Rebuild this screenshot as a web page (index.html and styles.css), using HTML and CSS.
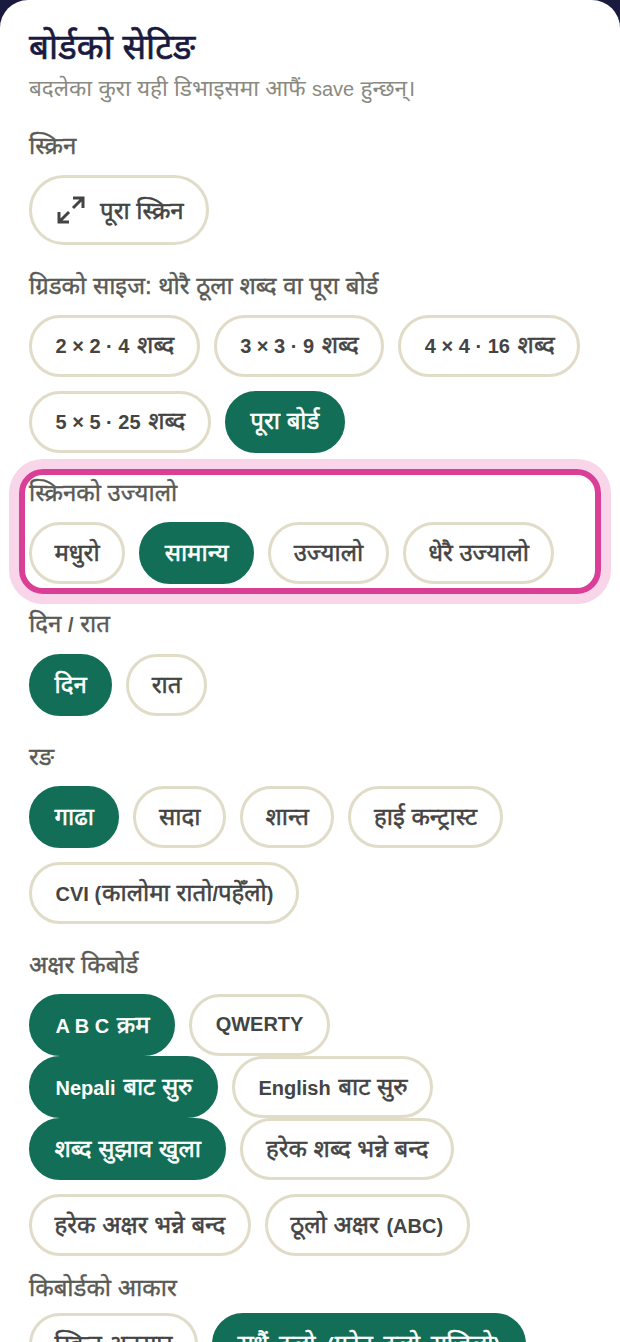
FILE: index.html
```html
<!DOCTYPE html>
<html lang="hi">
<head>
    <meta charset="UTF-8">
    <meta name="viewport" content="width=device-width, initial-scale=1.0">
    <title>बोर्डको सेटिङ</title>
    <link rel="stylesheet" href="styles.css">
</head>
<body>
    <div class="sheet">
        <h1>बोर्डको सेटिङ</h1>
        <p class="hint">बदलेका कुरा यही डिभाइसमा आफैं <span class="lat">save</span> हुन्छन्।</p>

        <div class="group group-first">
            <div class="label">स्क्रिन</div>
            <div class="chips">
                <button class="chip chip-icon">
                    <svg class="icon" viewBox="0 0 28 28" fill="none" stroke="currentColor" stroke-width="3">
                        <path d="M16 12 26 2M16 2h10v10M12 16 2 26M2 16v10h10"/>
                    </svg>
                    पूरा स्क्रिन
                </button>
            </div>
        </div>

        <div class="group">
            <div class="label">ग्रिडको साइज: थोरै ठूला शब्द वा पूरा बोर्ड</div>
            <div class="chips">
                <button class="chip"><span class="lat">2 × 2 · 4</span> शब्द</button>
                <button class="chip"><span class="lat">3 × 3 · 9</span> शब्द</button>
                <button class="chip"><span class="lat">4 × 4 · 16</span> शब्द</button>
                <button class="chip"><span class="lat">5 × 5 · 25</span> शब्द</button>
                <button class="chip active">पूरा बोर्ड</button>
            </div>
        </div>

        <div class="group highlight">
            <div class="label">स्क्रिनको उज्यालो</div>
            <div class="chips">
                <button class="chip">मधुरो</button>
                <button class="chip active">सामान्य</button>
                <button class="chip">उज्यालो</button>
                <button class="chip">धेरै उज्यालो</button>
            </div>
        </div>

        <div class="group">
            <div class="label">दिन <span class="lat">/</span> रात</div>
            <div class="chips">
                <button class="chip active">दिन</button>
                <button class="chip">रात</button>
            </div>
        </div>

        <div class="group">
            <div class="label">रङ</div>
            <div class="chips">
                <button class="chip active">गाढा</button>
                <button class="chip">सादा</button>
                <button class="chip">शान्त</button>
                <button class="chip">हाई कन्ट्रास्ट</button>
                <button class="chip"><span class="lat">CVI (</span>कालोमा रातो<span class="lat">/</span>पहेँलो<span class="lat">)</span></button>
            </div>
        </div>

        <div class="group">
            <div class="label">अक्षर किबोर्ड</div>
            <div class="chips">
                <button class="chip active"><span class="lat">A B C</span> क्रम</button>
                <button class="chip"><span class="lat">QWERTY</span></button>
            </div>
            <div class="chips">
                <button class="chip active"><span class="lat">Nepali</span> बाट सुरु</button>
                <button class="chip"><span class="lat">English</span> बाट सुरु</button>
            </div>
            <div class="chips">
                <button class="chip active">शब्द सुझाव खुला</button>
                <button class="chip">हरेक शब्द भन्ने बन्द</button>
                <button class="chip">हरेक अक्षर भन्ने बन्द</button>
                <button class="chip">ठूलो अक्षर <span class="lat">(ABC)</span></button>
            </div>
        </div>

        <div class="group group-tight">
            <div class="label">किबोर्डको आकार</div>
            <div class="chips">
                <button class="chip">स्क्रिन अनुसार</button>
                <button class="chip chip-long active">सधैं ठूलो <span class="lat">(</span>फोन ठूलो सजिलो<span class="lat">)</span></button>
            </div>
        </div>
    </div>
</body>
</html>
```

FILE: styles.css
```css
html, body {
    margin: 0;
    height: 100%;
    overflow: hidden;
}
body {
    background: #1a1a3e;
    font-family: 'Liberation Sans', 'Noto Sans', sans-serif;
}
.sheet {
    background: #fff;
    border-radius: 28px 28px 0 0;
    padding: 27px 29px 0;
    height: 100%;
    box-sizing: border-box;
}
.lat {
    font-size: 20px;
    font-weight: 700;
    -webkit-text-stroke: 0;
}
.chip .lat:first-child {
    padding: 0 1px;
}
h1 {
    margin: 0;
    font-size: 35px;
    line-height: 40px;
    font-weight: 400;
    -webkit-text-stroke: 0.7px #1a1a3e;
    color: #1a1a3e;
}
.hint {
    margin: 7px 0 0;
    font-size: 22.5px;
    line-height: 30px;
    font-weight: 400;
    color: #8a8a80;
}
.hint .lat {
    font-weight: 400;
}
.group {
    margin-top: 27px;
}
.group-first {
    margin-top: 28px;
}
.group-tight {
    margin-top: 18px;
}
.label {
    padding-top: 1px;
    font-size: 24px;
    line-height: 26px;
    font-weight: 400;
    -webkit-text-stroke: 0.4px #5a5a55;
    color: #5a5a55;
    margin-bottom: 16px;
}
.group-tight .label {
    margin-bottom: 12px;
}
.chips {
    display: flex;
    flex-wrap: wrap;
    gap: 14px;
}
.chip {
    height: 62px;
    padding: 0 22.5px 4px;
    border: 3px solid #e0dcc8;
    border-radius: 31px;
    background: #fff;
    color: #444;
    font-family: inherit;
    font-size: 24px;
    font-weight: 400;
    -webkit-text-stroke: 0.5px currentColor;
}
.chip.active {
    background: #126e56;
    border-color: #126e56;
    color: #fff;
}
.chip-long {
    word-spacing: 4px;
}
.chip-icon {
    height: 69.5px;
    border-radius: 35px;
    display: flex;
    align-items: center;
    gap: 15px;
    padding: 0 22px 0 25px;
}
.icon {
    width: 28px;
    height: 28px;
}
.highlight {
    margin: 16.5px -10px -11px;
    padding: 4px;
    border: 6px solid #d93f96;
    border-radius: 24px;
    box-shadow: 0 0 0 10px #f8d5e8;
}
```
